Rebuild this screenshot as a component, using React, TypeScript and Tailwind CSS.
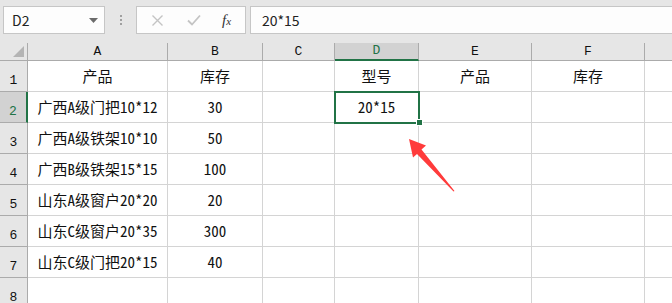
import React from 'react';

const cols = [
  { key: 'A', w: 'w-[140px]' },
  { key: 'B', w: 'w-[95px]' },
  { key: 'C', w: 'w-[72px]' },
  { key: 'D', w: 'w-[84px]' },
  { key: 'E', w: 'w-[113px]' },
  { key: 'F', w: 'w-[113px]' },
  { key: '', w: 'w-[90px]' },
];

const data: string[][] = [
  ['产品', '库存', '', '型号', '产品', '库存', ''],
  ['广西A级门把10*12', '30', '', '20*15', '', '', ''],
  ['广西A级铁架10*10', '50', '', '', '', '', ''],
  ['广西B级铁架15*15', '100', '', '', '', '', ''],
  ['山东A级窗户20*20', '20', '', '', '', '', ''],
  ['山东C级窗户20*35', '300', '', '', '', '', ''],
  ['山东C级门把20*15', '40', '', '', '', '', ''],
  ['', '', '', '', '', '', ''],
];

const cellFont = { fontFamily: '"Noto Sans Mono CJK SC", "Noto Sans CJK SC", "Liberation Mono", monospace' };
const headFont = { fontFamily: '"Liberation Mono", "DejaVu Sans Mono", monospace' };

const FormulaBar = () => (
  <div className="h-[43px] bg-[#e6e6e6] flex items-start pt-[6px] pl-[3px]">
    <div className="w-[102px] h-[28px] bg-[#fdfdfd] border border-[#c6c6c6] flex items-center justify-between pl-[8px] pr-[6px]">
      <span className="text-[14px] text-[#222]" style={{ fontFamily: '"Noto Sans CJK SC", "Liberation Sans", sans-serif' }}>D2</span>
      <svg width="9" height="5" viewBox="0 0 9 5"><path d="M0 0 L9 0 L4.5 5 Z" fill="#6b6b6b" /></svg>
    </div>
    <div className="w-[31px] h-[28px] flex flex-col items-center justify-center gap-[2px]">
      <div className="w-[2px] h-[2px] bg-[#a0a0a0]" />
      <div className="w-[2px] h-[2px] bg-[#a0a0a0]" />
      <div className="w-[2px] h-[2px] bg-[#a0a0a0]" />
    </div>
    <div className="w-[110px] h-[28px] bg-[#fdfdfd] border border-[#c6c6c6] flex items-center pl-[14px]">
      <svg width="13" height="13" viewBox="0 0 13 13">
        <path d="M1.5 1.5 L11.5 11.5 M11.5 1.5 L1.5 11.5" stroke="#c4c4c4" strokeWidth="1.4" />
      </svg>
      <svg className="ml-[23px]" width="14" height="12" viewBox="0 0 14 12">
        <path d="M1 6.5 L5 10.5 L13 1.5" stroke="#c4c4c4" strokeWidth="1.8" fill="none" />
      </svg>
      <span
        className="ml-[21px] text-[15px] italic text-[#333] leading-none"
        style={{ fontFamily: '"Liberation Serif", serif' }}
      >
        f<span className="text-[11px]">x</span>
      </span>
    </div>
    <div className="ml-[4px] flex-1 h-[28px] bg-[#fdfdfd] border border-[#c6c6c6] border-r-0 flex items-center pl-[11px]">
      <span className="text-[14px] text-[#222]" style={{ fontFamily: '"Noto Sans CJK SC", "Liberation Sans", sans-serif' }}>20*15</span>
    </div>
  </div>
);

const HeaderRow = () => (
  <div className="flex h-[18px] bg-[#e6e6e6]">
    <div className="w-[28px] shrink-0 h-full border-r border-b border-[#ababab] flex items-end justify-end pr-[3px] pb-[3px]">
      <svg width="11" height="11" viewBox="0 0 11 11"><path d="M11 0 L11 11 L0 11 Z" fill="#b4b4b4" /></svg>
    </div>
    {cols.map((c, i) =>
      c.key === 'D' ? (
        <div
          key={i}
          className={`${c.w} shrink-0 h-full bg-[#d2d2d2] border-r border-[#ababab] border-b-2 border-b-[#217346] flex items-center justify-center text-[13px] text-[#217346]`}
          style={headFont}
        >
          {c.key}
        </div>
      ) : (
        <div
          key={i}
          className={`${c.w} shrink-0 h-full border-r border-b border-[#ababab] flex items-center justify-center text-[13px] text-[#111]`}
          style={headFont}
        >
          {c.key}
        </div>
      )
    )}
  </div>
);

const Arrow = () => (
  <svg className="absolute left-[400px] top-[130px]" width="70" height="70" viewBox="0 0 70 70">
    <path d="M9 9 L26 15.5 L21.5 19.5 L54.5 61 L53.5 61.5 L17 24 L13 27.5 Z" fill="#ff3b3b" />
  </svg>
);

export default function App() {
  return (
    <div className="w-[672px] h-[303px] overflow-hidden bg-white relative">
      <FormulaBar />
      <HeaderRow />
      {data.map((row, ri) => {
        const sel = ri === 1;
        return (
          <div key={ri} className="flex h-[31px]">
            {sel ? (
              <div
                className="w-[28px] shrink-0 h-full bg-[#d2d2d2] border-r-2 border-r-[#217346] border-b border-b-[#ababab] flex items-end justify-center pb-[1px] text-[13px] text-[#217346]"
                style={headFont}
              >
                {ri + 1}
              </div>
            ) : (
              <div
                className="w-[28px] shrink-0 h-full bg-[#e6e6e6] border-r border-b border-[#ababab] flex items-end justify-center pb-[1px] text-[13px] text-[#111]"
                style={headFont}
              >
                {ri + 1}
              </div>
            )}
            {cols.map((c, ci) => (
              <div
                key={ci}
                className={`${c.w} shrink-0 h-full border-r border-b border-[#d4d4d4] flex items-center justify-center text-[15px] text-[#111] whitespace-nowrap`}
                style={cellFont}
              >
                {row[ci]}
              </div>
            ))}
          </div>
        );
      })}
      <div className="absolute left-[334px] top-[91px] w-[86px] h-[33px] border-2 border-[#217346]" />
      <div className="absolute left-[416px] top-[119px] w-[7px] h-[7px] bg-[#217346] border border-white" />
      <Arrow />
    </div>
  );
}
